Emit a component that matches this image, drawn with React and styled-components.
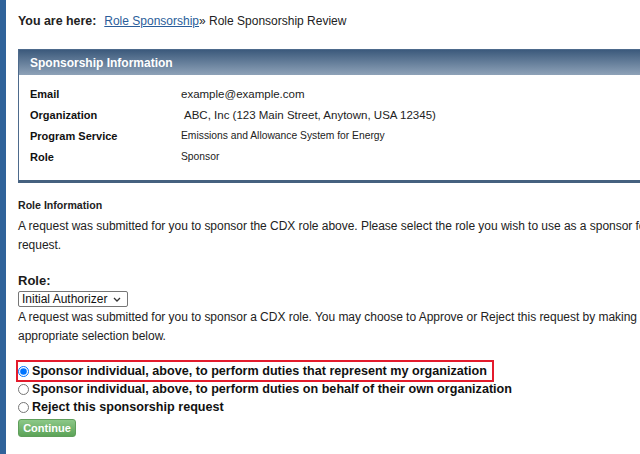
import styled, { createGlobalStyle } from "styled-components";

const GlobalStyle = createGlobalStyle`
  html, body {
    margin: 0;
    padding: 0;
    background: #ffffff;
    overflow: hidden;
  }
  body {
    font-family: "Liberation Sans", Arial, sans-serif;
    color: #1a1a1a;
  }
`;

const Page = styled.div`
  display: flex;
  min-height: 454px;
`;

const SideBar = styled.div`
  flex: 0 0 6px;
  background: #30639a;
`;

const Content = styled.div`
  flex: 0 0 700px;
  padding: 13px 0 0 12px;
`;

const Breadcrumb = styled.div`
  font-size: 12px;
  line-height: 16px;
  color: #222222;
  & b {
    font-size: 12.4px;
    margin-right: 8px;
  }
  & a {
    color: #2a5d9a;
    text-decoration: underline;
  }
`;

const Panel = styled.div`
  margin-top: 20px;
  border: 1px solid #4d6a8c;
  border-bottom: 3px solid #45617f;
`;

const PanelHeader = styled.div`
  height: 25px;
  display: flex;
  align-items: center;
  padding-left: 11px;
  background: linear-gradient(#3c5a7c, #8ea2b8);
  color: #ffffff;
  font-weight: bold;
  font-size: 12px;
`;

const InfoTable = styled.div`
  display: grid;
  grid-template-columns: 151px 1fr;
  grid-auto-rows: 21px;
  align-items: center;
  padding: 8px 11px 13px;
`;

const InfoLabel = styled.div`
  font-weight: bold;
  font-size: 11px;
  color: #111111;
`;

const InfoValue = styled.div`
  font-size: ${({ small }) => (small ? "10.3px" : "11.5px")};
  padding-left: ${({ indent }) => (indent ? "3px" : "0")};
  color: #222222;
`;

const SectionTitle = styled.div`
  margin-top: 16px;
  font-weight: bold;
  font-size: 10.6px;
  color: #222222;
`;

const Paragraph = styled.p`
  margin: ${({ tight }) => (tight ? "1px 0 0" : "6px 0 0")};
  font-size: 12px;
  letter-spacing: -0.03px;
  line-height: 19px;
  color: #222222;
  white-space: nowrap;
`;

const FieldLabel = styled.div`
  margin-top: 18px;
  font-weight: bold;
  font-size: 13px;
  line-height: 16px;
`;

const Select = styled.select`
  display: block;
  margin: 2px 0 0;
  width: 110px;
  height: 16px;
  padding: 0 0 0 3px;
  appearance: none;
  font-family: "Liberation Sans", Arial, sans-serif;
  font-size: 12px;
  line-height: 14px;
  border: 1px solid #767676;
  border-radius: 2px;
  color: #111111;
  background: #ffffff
    url("data:image/svg+xml,%3Csvg xmlns='http://www.w3.org/2000/svg' width='8' height='5' viewBox='0 0 8 5'%3E%3Cpath d='M1 1l3 3 3-3' fill='none' stroke='%23333' stroke-width='1.3'/%3E%3C/svg%3E")
    no-repeat right 6px center;
`;

const Options = styled.div`
  margin-top: 16px;
  display: flex;
  flex-direction: column;
  align-items: flex-start;
`;

const RadioRow = styled.label`
  display: flex;
  align-items: center;
  height: 18px;
  padding-right: ${({ highlight }) => (highlight ? "5px" : "0")};
  outline: ${({ highlight }) => (highlight ? "2px solid #e31b2c" : "none")};
  font-weight: bold;
  font-size: 12.6px;
  color: #111111;
  & input {
    margin: 0 3px 0 0;
    width: 11px;
    height: 11px;
  }
`;

const ContinueButton = styled.button`
  margin-top: 3px;
  width: 58px;
  height: 18px;
  padding: 0;
  border: 1px solid #5f9e5b;
  border-radius: 3px;
  background: linear-gradient(#8cc887, #5ca358);
  color: #ffffff;
  font-family: "Liberation Sans", Arial, sans-serif;
  font-weight: bold;
  font-size: 11px;
`;

const info = [
  { label: "Email", value: "example@example.com" },
  { label: "Organization", value: "ABC, Inc (123 Main Street, Anytown, USA 12345)", indent: true },
  { label: "Program Service", value: "Emissions and Allowance System for Energy", small: true },
  { label: "Role", value: "Sponsor", small: true },
];

const choices = [
  "Sponsor individual, above, to perform duties that represent my organization",
  "Sponsor individual, above, to perform duties on behalf of their own organization",
  "Reject this sponsorship request",
];

export default function App() {
  return (
    <Page>
      <GlobalStyle />
      <SideBar />
      <Content>
        <Breadcrumb>
          <b>You are here:</b>
          <a href="#">Role Sponsorship</a>» Role Sponsorship Review
        </Breadcrumb>

        <Panel>
          <PanelHeader>Sponsorship Information</PanelHeader>
          <InfoTable>
            {info.map((row) => [
              <InfoLabel key={row.label + "-l"}>{row.label}</InfoLabel>,
              <InfoValue key={row.label + "-v"} small={row.small} indent={row.indent}>
                {row.value}
              </InfoValue>,
            ])}
          </InfoTable>
        </Panel>

        <SectionTitle>Role Information</SectionTitle>
        <Paragraph>
          A request was submitted for you to sponsor the CDX role above. Please select the role you wish to use as a sponsor for this
          <br />
          request.
        </Paragraph>

        <FieldLabel>Role:</FieldLabel>
        <Select defaultValue="ia">
          <option value="ia">Initial Authorizer</option>
        </Select>
        <Paragraph tight>
          A request was submitted for you to sponsor a CDX role. You may choose to Approve or Reject this request by making the
          <br />
          appropriate selection below.
        </Paragraph>

        <Options>
          {choices.map((text, i) => (
            <RadioRow key={text} highlight={i === 0}>
              <input type="radio" name="sponsor" defaultChecked={i === 0} />
              {text}
            </RadioRow>
          ))}
          <ContinueButton>Continue</ContinueButton>
        </Options>
      </Content>
    </Page>
  );
}
